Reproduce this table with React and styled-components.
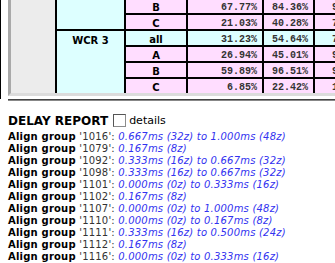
import React from 'react';
import styled, { createGlobalStyle } from 'styled-components';

const GlobalStyle = createGlobalStyle`
  html, body {
    margin: 0;
    padding: 0;
    background: #fff;
    overflow: hidden;
  }
  body {
    font-family: "DejaVu Sans", Verdana, sans-serif;
    color: #000;
  }
`;

const PINK = '#ffddff';
const CYAN = '#ddffff';

const Panel = styled.div`
  border-left: 1px solid #000;
  padding: 0 0 3px 7px;
`;

const ScrollBox = styled.div`
  height: 93px;
  overflow: hidden;
  border-left: 3px solid #a9a9a9;
  border-bottom: 3px solid #dcdcdc;
`;

const Grid = styled.div`
  display: grid;
  grid-template-columns: 46px 69px 62px 76px 51px 60px;
  grid-auto-rows: 16px;
  margin-top: -1px;
  width: max-content;
`;

const Cell = styled.div`
  box-sizing: border-box;
  border-right: 2px solid #000;
  border-bottom: 2px solid #000;
  background: ${p => p.$bg || PINK};
  display: flex;
  align-items: center;
  padding-top: 3px;
  padding-right: 5px;
  justify-content: ${p => (p.$center ? 'center' : 'flex-end')};
  font-family: ${p => (p.$mono ? '"Liberation Mono", "Courier New", monospace' : '"DejaVu Sans", Verdana, sans-serif')};
  font-size: 10px;
  font-weight: bold;
  color: ${p => (p.$mono ? '#333' : '#000')};
  white-space: nowrap;
  ${p => p.$center && 'padding-right: 0;'}
`;

const SideCell = styled.div`
  box-sizing: border-box;
  grid-column: 1;
  grid-row: 1 / span 6;
  background: #ececec;
  border-right: 2px solid #000;
`;

const GroupCell = styled.div`
  box-sizing: border-box;
  grid-column: 2;
  grid-row: ${p => p.$rows};
  background: ${CYAN};
  border-right: 2px solid #000;
  border-bottom: 2px solid #000;
  text-align: center;
  padding-top: 4px;
  font-size: 10px;
  font-weight: bold;
  line-height: 12px;
`;

const Rule = styled.hr`
  margin: 0 0 0 8px;
  border: 0;
  border-top: 1px solid #444;
  border-bottom: 1px solid #888;
  height: 0;
`;

const Report = styled.div`
  padding: 13px 0 0 8px;
`;

const Heading = styled.div`
  display: flex;
  align-items: center;
  height: 14px;
  margin-bottom: 3px;
`;

const Title = styled.span`
  font-size: 12px;
  font-weight: bold;
  line-height: 14px;
`;

const Check = styled.input.attrs({ type: 'checkbox' })`
  appearance: none;
  box-sizing: border-box;
  width: 13px;
  height: 13px;
  margin: -2px 3px 0 5px;
  background: #fff;
  border: 1px solid #8c8c8c;
  border-top-color: #555;
  border-left-color: #555;
`;

const CheckLabel = styled.span`
  font-size: 11px;
  line-height: 14px;
`;

const Line = styled.div`
  font-size: 10px;
  line-height: 12px;
  letter-spacing: 0.2px;
  white-space: nowrap;
  color: #333;
`;

const GroupName = styled.b`
  color: #000;
`;

const Range = styled.i`
  color: #3232f0;
`;

const rows = [
  { sub: 'B', vals: ['67.77%', '84.36%', '98.12%'] },
  { sub: 'C', vals: ['21.03%', '40.28%', '70.55%'] },
  { sub: 'all', vals: ['31.23%', '54.64%', '70.87%'], hl: true },
  { sub: 'A', vals: ['26.94%', '45.01%', '97.32%'] },
  { sub: 'B', vals: ['59.89%', '96.51%', '99.10%'] },
  { sub: 'C', vals: ['6.85%', '22.42%', '12.64%'] },
];

const delays = [
  ['1016', '0.667ms (32z) to 1.000ms (48z)'],
  ['1079', '0.167ms (8z)'],
  ['1092', '0.333ms (16z) to 0.667ms (32z)'],
  ['1098', '0.333ms (16z) to 0.667ms (32z)'],
  ['1101', '0.000ms (0z) to 0.333ms (16z)'],
  ['1102', '0.167ms (8z)'],
  ['1107', '0.000ms (0z) to 1.000ms (48z)'],
  ['1110', '0.000ms (0z) to 0.167ms (8z)'],
  ['1111', '0.333ms (16z) to 0.500ms (24z)'],
  ['1112', '0.167ms (8z)'],
  ['1116', '0.000ms (0z) to 0.333ms (16z)'],
];

export default function App() {
  return (
    <>
      <GlobalStyle />
      <Panel>
        <ScrollBox>
          <Grid>
            <SideCell />
            <GroupCell $rows="1 / span 2" />
            <GroupCell $rows="3 / span 4">WCR 3</GroupCell>
            {rows.map((row, i) => (
              <React.Fragment key={i}>
                <Cell $center $bg={row.hl ? CYAN : PINK} style={{ gridRow: i + 1, gridColumn: 3 }}>
                  {row.sub}
                </Cell>
                {row.vals.map((v, j) => (
                  <Cell key={j} $mono $bg={row.hl ? CYAN : PINK} style={{ gridRow: i + 1, gridColumn: 4 + j }}>
                    {v}
                  </Cell>
                ))}
              </React.Fragment>
            ))}
          </Grid>
        </ScrollBox>
      </Panel>
      <Rule />
      <Report>
        <Heading>
          <Title>DELAY REPORT</Title>
          <Check />
          <CheckLabel>details</CheckLabel>
        </Heading>
        {delays.map(([id, range]) => (
          <Line key={id}>
            <GroupName>Align group</GroupName> '{id}': <Range>{range}</Range>
          </Line>
        ))}
      </Report>
    </>
  );
}
